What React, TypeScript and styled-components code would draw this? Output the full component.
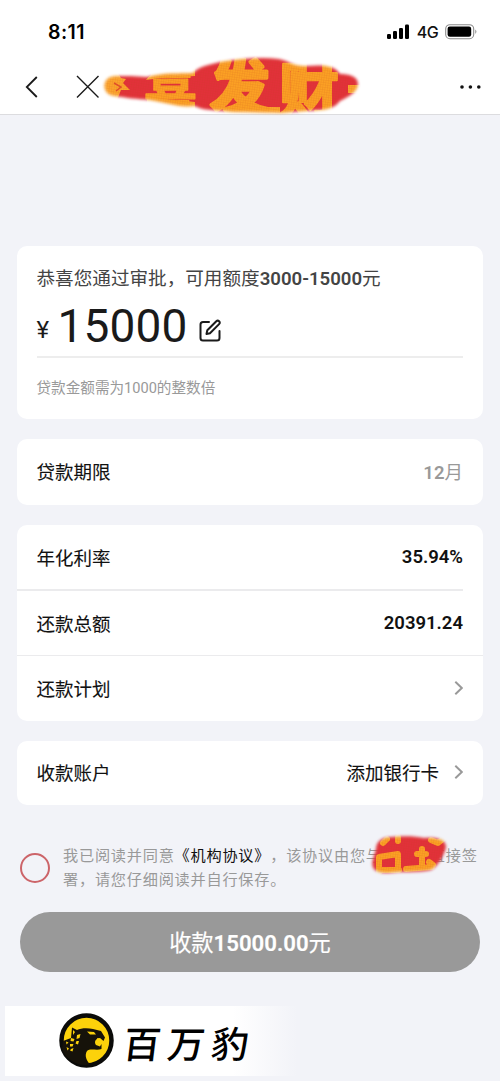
import React from "react";
import styled, { createGlobalStyle } from "styled-components";

const GlobalStyle = createGlobalStyle`
  * { box-sizing: border-box; }
  body {
    margin: 0;
    background: #f2f3f8;
    font-family: Roboto, "Noto Sans CJK SC", sans-serif;
    color: #1a1a1a;
  }
`;

const Page = styled.div`
  width: 500px;
  height: 1081px;
  display: flex;
  flex-direction: column;
  overflow: hidden;
  background: #f2f3f8;
`;

const Header = styled.header`
  position: relative;
  height: 115px;
  background: #fff;
  border-bottom: 1px solid #dcdcdf;
`;

const StatusBar = styled.div`
  height: 60px;
  padding: 4px 23px 0 48px;
  display: flex;
  align-items: center;
  justify-content: space-between;
  font-family: Inter, sans-serif;
`;

const Clock = styled.span`
  font-size: 19.5px;
  font-weight: 600;
  color: #000;
  letter-spacing: 0.4px;
`;

const StatusIcons = styled.div`
  display: flex;
  align-items: center;
`;

const Network = styled.span`
  margin: 0 7px 0 7px;
  font-size: 16px;
  font-weight: 500;
  line-height: 20px;
  letter-spacing: -0.6px;
  color: #111;
`;

const NavBar = styled.nav`
  height: 54px;
  padding: 0 18px 0 24px;
  display: flex;
  align-items: center;
`;

const NavIcon = styled.svg<{ $gap?: string }>`
  flex: none;
  margin-left: ${(p) => p.$gap ?? "0"};
`;

const Smear = styled.svg<{ $left: number; $top: number }>`
  position: absolute;
  left: ${(p) => p.$left}px;
  top: ${(p) => p.$top}px;
  overflow: visible;
  pointer-events: none;
`;

const Content = styled.main`
  padding: 130.5px 17px 0 16.5px;
  display: flex;
  flex-direction: column;
  gap: 20px;
`;

const Card = styled.section`
  background: #fff;
  border-radius: 10px;
`;

const AmountCard = styled(Card)`
  height: 173px;
  padding: 19.5px 20px 0 20px;
`;

const AmountTitle = styled.div`
  height: 28px;
  line-height: 28px;
  font-size: 18.6px;
  color: #444;
  white-space: nowrap;
  b { font-weight: 600; }
`;

const AmountLine = styled.div`
  height: 65px;
  display: flex;
  border-bottom: 2px solid #ededed;
`;

const Currency = styled.span`
  width: 21px;
  padding-top: 21.5px;
  font-size: 24px;
  line-height: 30px;
`;

const Amount = styled.span`
  padding-top: 6px;
  font-size: 46px;
  line-height: 54px;
  letter-spacing: 0.15px;
`;

const EditIcon = styled.svg`
  margin: 26px 0 0 11px;
`;

const Hint = styled.div`
  padding-top: 19px;
  font-size: 14.6px;
  line-height: 22px;
  color: #999;
`;

const Row = styled.div<{ $height: number; $divider?: "inset" | "full" }>`
  height: ${(p) => p.$height}px;
  padding: 0 20px 1px 20px;
  display: flex;
  align-items: center;
  justify-content: space-between;
  font-size: 18.5px;
  background-image: ${(p) => (p.$divider ? "linear-gradient(#ebebed, #ebebed)" : "none")};
  background-repeat: no-repeat;
  background-position: left bottom;
  background-size: ${(p) => (p.$divider === "inset" ? "calc(100% - 20px) 2px" : "100% 1px")};
`;

const Label = styled.span`
  color: #111;
  -webkit-text-stroke: 0.1px #111;
`;

const Value = styled.span<{ $muted?: boolean }>`
  display: flex;
  align-items: center;
  gap: 15px;
  color: ${(p) => (p.$muted ? "#999" : "#111")};
  b { font-weight: 600; }
`;

const Agreement = styled.div`
  position: relative;
  margin-top: 20px;
  height: 48px;
  display: flex;
  align-items: center;
`;

const Radio = styled.span`
  flex: none;
  width: 30px;
  height: 30px;
  margin: 0 13px 2px 3.5px;
  border: 2px solid #cc6469;
  border-radius: 50%;
`;

const Terms = styled.p`
  margin: 0;
  font-size: 15.2px;
  line-height: 23.7px;
  letter-spacing: 0.75px;
  text-spacing-trim: space-all;
  color: #999;
  white-space: nowrap;
`;

const TermsLink = styled.span`
  color: #111;
`;

const Blank = styled.span`
  display: inline-block;
  width: 48px;
`;

const Submit = styled.button`
  flex: none;
  width: 460px;
  height: 60px;
  margin: 19px 0 0 20px;
  padding: 0 0 2px;
  border: 0;
  border-radius: 30px;
  background: #999;
  color: #fff;
  font-family: inherit;
  font-size: 22.2px;
  font-weight: 400;
  -webkit-text-stroke: 0.2px #fff;
  b { font-weight: 600; }
`;

const Brand = styled.footer`
  flex: none;
  width: 292px;
  height: 70px;
  margin: 34px 0 0 5px;
  padding-left: 54px;
  display: flex;
  align-items: center;
  background: linear-gradient(90deg, #fff 78%, #f2f3f8 100%);
`;

const BrandName = styled.span`
  margin: 2px 0 0 10px;
  font-family: "Noto Sans CJK SC", sans-serif;
  font-size: 37px;
  font-weight: 500;
  line-height: 50px;
  letter-spacing: 7px;
  color: #000;
  transform: skewX(-7deg);
  white-space: nowrap;
`;

const Chevron = () => (
  <svg width="9" height="16" viewBox="0 0 9 16" fill="none" stroke="#999" strokeWidth="2">
    <path d="M1.3 1.8 L7.8 8 L1.3 14.2" />
  </svg>
);

const Weave = ({ id }: { id: string }) => (
  <pattern id={id} width="2.4" height="2.4" patternUnits="userSpaceOnUse" patternTransform="rotate(8)">
    <path d="M0 .5H2.4M.5 0V2.4" stroke="#c2401a" strokeWidth=".5" opacity=".22" />
  </pattern>
);

const titleSmear =
  "M13 38 C0 36 0 19 14 18 L30 18 L46 19 C65 14 77 16 92 15 C98 8 108 7 119 4 C145 0 162 -1 178 1 C189 3 190 8 205 8 C222 7 233 7 239 16 C247 16 257 18 257 26 C257 34 247 39 239 43 C232 52 223 52 205 53 L180 55 L132 54 C111 52 100 52 94 48 C78 50 63 44 48 42 C35 41 27 40 13 38Z";

const TitleSmear = () => (
  <Smear $left={101} $top={58} width="262" height="56" viewBox="0 0 262 56">
    <defs>
      <filter id="soft" x="-5%" y="-15%" width="110%" height="130%">
        <feGaussianBlur stdDeviation="1.8" />
      </filter>
      <mask id="titleMask" maskUnits="userSpaceOnUse" x="-8" y="-8" width="280" height="72">
        <path d={titleSmear} fill="#fff" filter="url(#soft)" />
      </mask>
      <Weave id="titleWeave" />
    </defs>
    <g mask="url(#titleMask)">
      <rect x="-8" y="-8" width="280" height="72" fill="#e2303a" />
      <path
        d="M-4 10 H14 L20 20 L25 21 L22 25 L29 32 L20 32 L16 42 H-4Z M45 22 C53 10 75 12 94 10 V18 L60 20Z M46 39 L94 44 V54 L46 48Z M128 49 H179 V60 H128Z M247 27 h12 v8 h-12Z"
        fill="#fca62c"
      />
      <path d="M13 25 L20 29 L15 33" fill="none" stroke="#e2502a" strokeWidth="1.5" />
      <g
        fill="#fca224"
        stroke="#fca224"
        strokeLinejoin="round"
        fontFamily="Noto Sans CJK SC"
        fontWeight="700"
      >
        <text x="43" y="51" fontSize="53" strokeWidth="1.4">喜</text>
        <text x="109" y="52" fontSize="60" strokeWidth="3.4">发</text>
        <text x="178" y="55" fontSize="60" strokeWidth="2.4">财</text>
      </g>
      <rect x="-8" y="-8" width="280" height="72" fill="url(#titleWeave)" />
    </g>
  </Smear>
);

const termsSmear =
  "M5 13 C5 5 12 1 20 1 C33 0 43 0 53 2 C65 1 75 3 75 11 C73 20 67 30 60 34 C45 37 31 35 17 37 C2 37 0 31 2 23Z";

const TermsSmear = () => (
  <Smear $left={354.5} $top={-9} width="76" height="38" viewBox="0 0 76 38">
    <defs>
      <filter id="softSmall" x="-10%" y="-20%" width="120%" height="140%">
        <feGaussianBlur stdDeviation="1.4" />
      </filter>
      <mask id="termsMask" maskUnits="userSpaceOnUse" x="-6" y="-6" width="90" height="52">
        <path d={termsSmear} fill="#fff" filter="url(#softSmall)" />
      </mask>
      <Weave id="termsWeave" />
    </defs>
    <g mask="url(#termsMask)">
      <rect x="-6" y="-6" width="90" height="52" fill="#e2303a" />
      <g fill="none" stroke="#fca224" strokeWidth="6" strokeLinecap="round" strokeLinejoin="round">
        <path d="M12 7 L16 3 M27 1 V5 M60 4 L67 7 L72 3" />
        <path d="M8 36 V21 L27 18 V33 M9 34 H28" />
        <path d="M35 33 L61 31 M51 13 V30 M46 18 H55 M58 26 L62 29" />
      </g>
      <rect x="-6" y="-6" width="90" height="52" fill="url(#termsWeave)" />
    </g>
  </Smear>
);

const PantherLogo = () => (
  <svg width="55" height="55" viewBox="0 0 55 55">
    <circle cx="27.5" cy="27.5" r="25" fill="#fcd20b" stroke="#0b0b09" strokeWidth="4.5" />
    <path
      d="M13 14.5 L18 17 C22 15 29 15 34 16 L42 18 L46 24.5 L44.5 28 L41 25 C36 26 35 29 37 32 L41 33.5 L42.5 31 L42.5 36 C38 38 31 35 28 38 C25 43 28 48 31 51.5 C18 54 7 46 3 36 L4 28 L12 25Z"
      fill="#16120a"
    />
    <path d="M28 18.5 L35 19 L37 21.5 L31 21.5Z M38 25 L39 28 L41 25.5" fill="#fcd20b" />
    <g fill="#fcd20b">
      <path d="M14 17 l2 2 -2 3Z M18 22 l3.5 -1 -1 4 -3 1Z M12 25 l3.5 1 -1 2.5 -3 -.5Z M17.500 28 l2.500 0 -1 3.500 -2.500 -1Z M7 28.500 l2.500 1 -2 2Z M11 31 l3.500 0 -1 2.500 -2.500 0Z M7.500 34 l2.500 1.500 -1.500 2Z M12 36 l2.500 -1 -1 3.500 -2.500 -1Z" />
    </g>
  </svg>
);

export default function App() {
  return (
    <Page>
      <GlobalStyle />
      <Header>
        <StatusBar>
          <Clock>8:11</Clock>
          <StatusIcons>
            <svg width="23" height="16" viewBox="0 0 23 16" fill="#000">
              <rect x="0" y="10" width="4" height="5" rx="1.2" />
              <rect x="6" y="7" width="4" height="8" rx="1.2" />
              <rect x="12" y="4" width="4" height="11" rx="1.2" />
              <rect x="18" y="0.5" width="4" height="14.5" rx="1.2" />
            </svg>
            <Network>4G</Network>
            <svg width="32" height="16" viewBox="0 0 32 16">
              <rect x="0.7" y="0.7" width="28" height="14" rx="4.2" fill="none" stroke="#8c8c8c" strokeWidth="1.1" />
              <rect x="2.6" y="2.6" width="23.6" height="10.2" rx="2.2" fill="#000" />
              <path d="M30.3 5.5 Q32.5 7.7 30.3 9.9Z" fill="#888" />
            </svg>
          </StatusIcons>
        </StatusBar>
        <NavBar>
          <NavIcon width="14" height="22" viewBox="0 0 14 22" fill="none" stroke="#1a1a1a" strokeWidth="1.8">
            <path d="M12.8 1 L2.8 11 L12.8 21" />
          </NavIcon>
          <NavIcon $gap="38px" width="24" height="24" viewBox="0 0 24 24" stroke="#1a1a1a" strokeWidth="1.4">
            <path d="M1 1 L22.5 22.5 M22.5 1 L1 22.5" />
          </NavIcon>
          <NavIcon $gap="auto" width="24" height="6" viewBox="0 0 24 6" fill="#111">
            <circle cx="4" cy="3" r="1.8" />
            <circle cx="12.4" cy="3" r="1.8" />
            <circle cx="20.8" cy="3" r="1.8" />
          </NavIcon>
        </NavBar>
        <TitleSmear />
      </Header>
      <Content>
        <AmountCard>
          <AmountTitle>
            恭喜您通过审批，可用额度<b>3000-15000</b>元
          </AmountTitle>
          <AmountLine>
            <Currency>¥</Currency>
            <Amount>15000</Amount>
            <EditIcon width="23" height="23" viewBox="0 0 23 23" fill="none" stroke="#1a1a1a" strokeWidth="2" strokeLinecap="round" strokeLinejoin="round">
              <path d="M10 3 H4 Q1.500 3 1.500 5.500 V19 Q1.500 21.500 4 21.500 H18 Q20.500 21.500 20.500 19 V12" />
              <path d="M7.500 15 L8.300 11.300 L17.300 2.300 Q18.700 1 20.100 2.300 Q21.500 3.700 20.100 5.100 L11 14.200Z" />
            </EditIcon>
          </AmountLine>
          <Hint>贷款金额需为1000的整数倍</Hint>
        </AmountCard>
        <Card>
          <Row $height={66}>
            <Label>贷款期限</Label>
            <Value $muted><span><b>12</b>月</span></Value>
          </Row>
        </Card>
        <Card>
          <Row $height={66} $divider="inset">
            <Label>年化利率</Label>
            <Value><b>35.94%</b></Value>
          </Row>
          <Row $height={65} $divider="full">
            <Label>还款总额</Label>
            <Value><b>20391.24</b></Value>
          </Row>
          <Row $height={65}>
            <Label>还款计划</Label>
            <Value><Chevron /></Value>
          </Row>
        </Card>
        <Card>
          <Row $height={64}>
            <Label>收款账户</Label>
            <Value><Label>添加银行卡</Label><Chevron /></Value>
          </Row>
        </Card>
        <Agreement>
          <Radio />
          <Terms>
            我已阅读并同意<TermsLink>《机构协议》</TermsLink>，该协议由您与<Blank />直接签
            <br />
            署，请您仔细阅读并自行保存。
          </Terms>
          <TermsSmear />
        </Agreement>
      </Content>
      <Submit>收款<b>15000.00</b>元</Submit>
      <Brand>
        <PantherLogo />
        <BrandName>百万豹</BrandName>
      </Brand>
    </Page>
  );
}
